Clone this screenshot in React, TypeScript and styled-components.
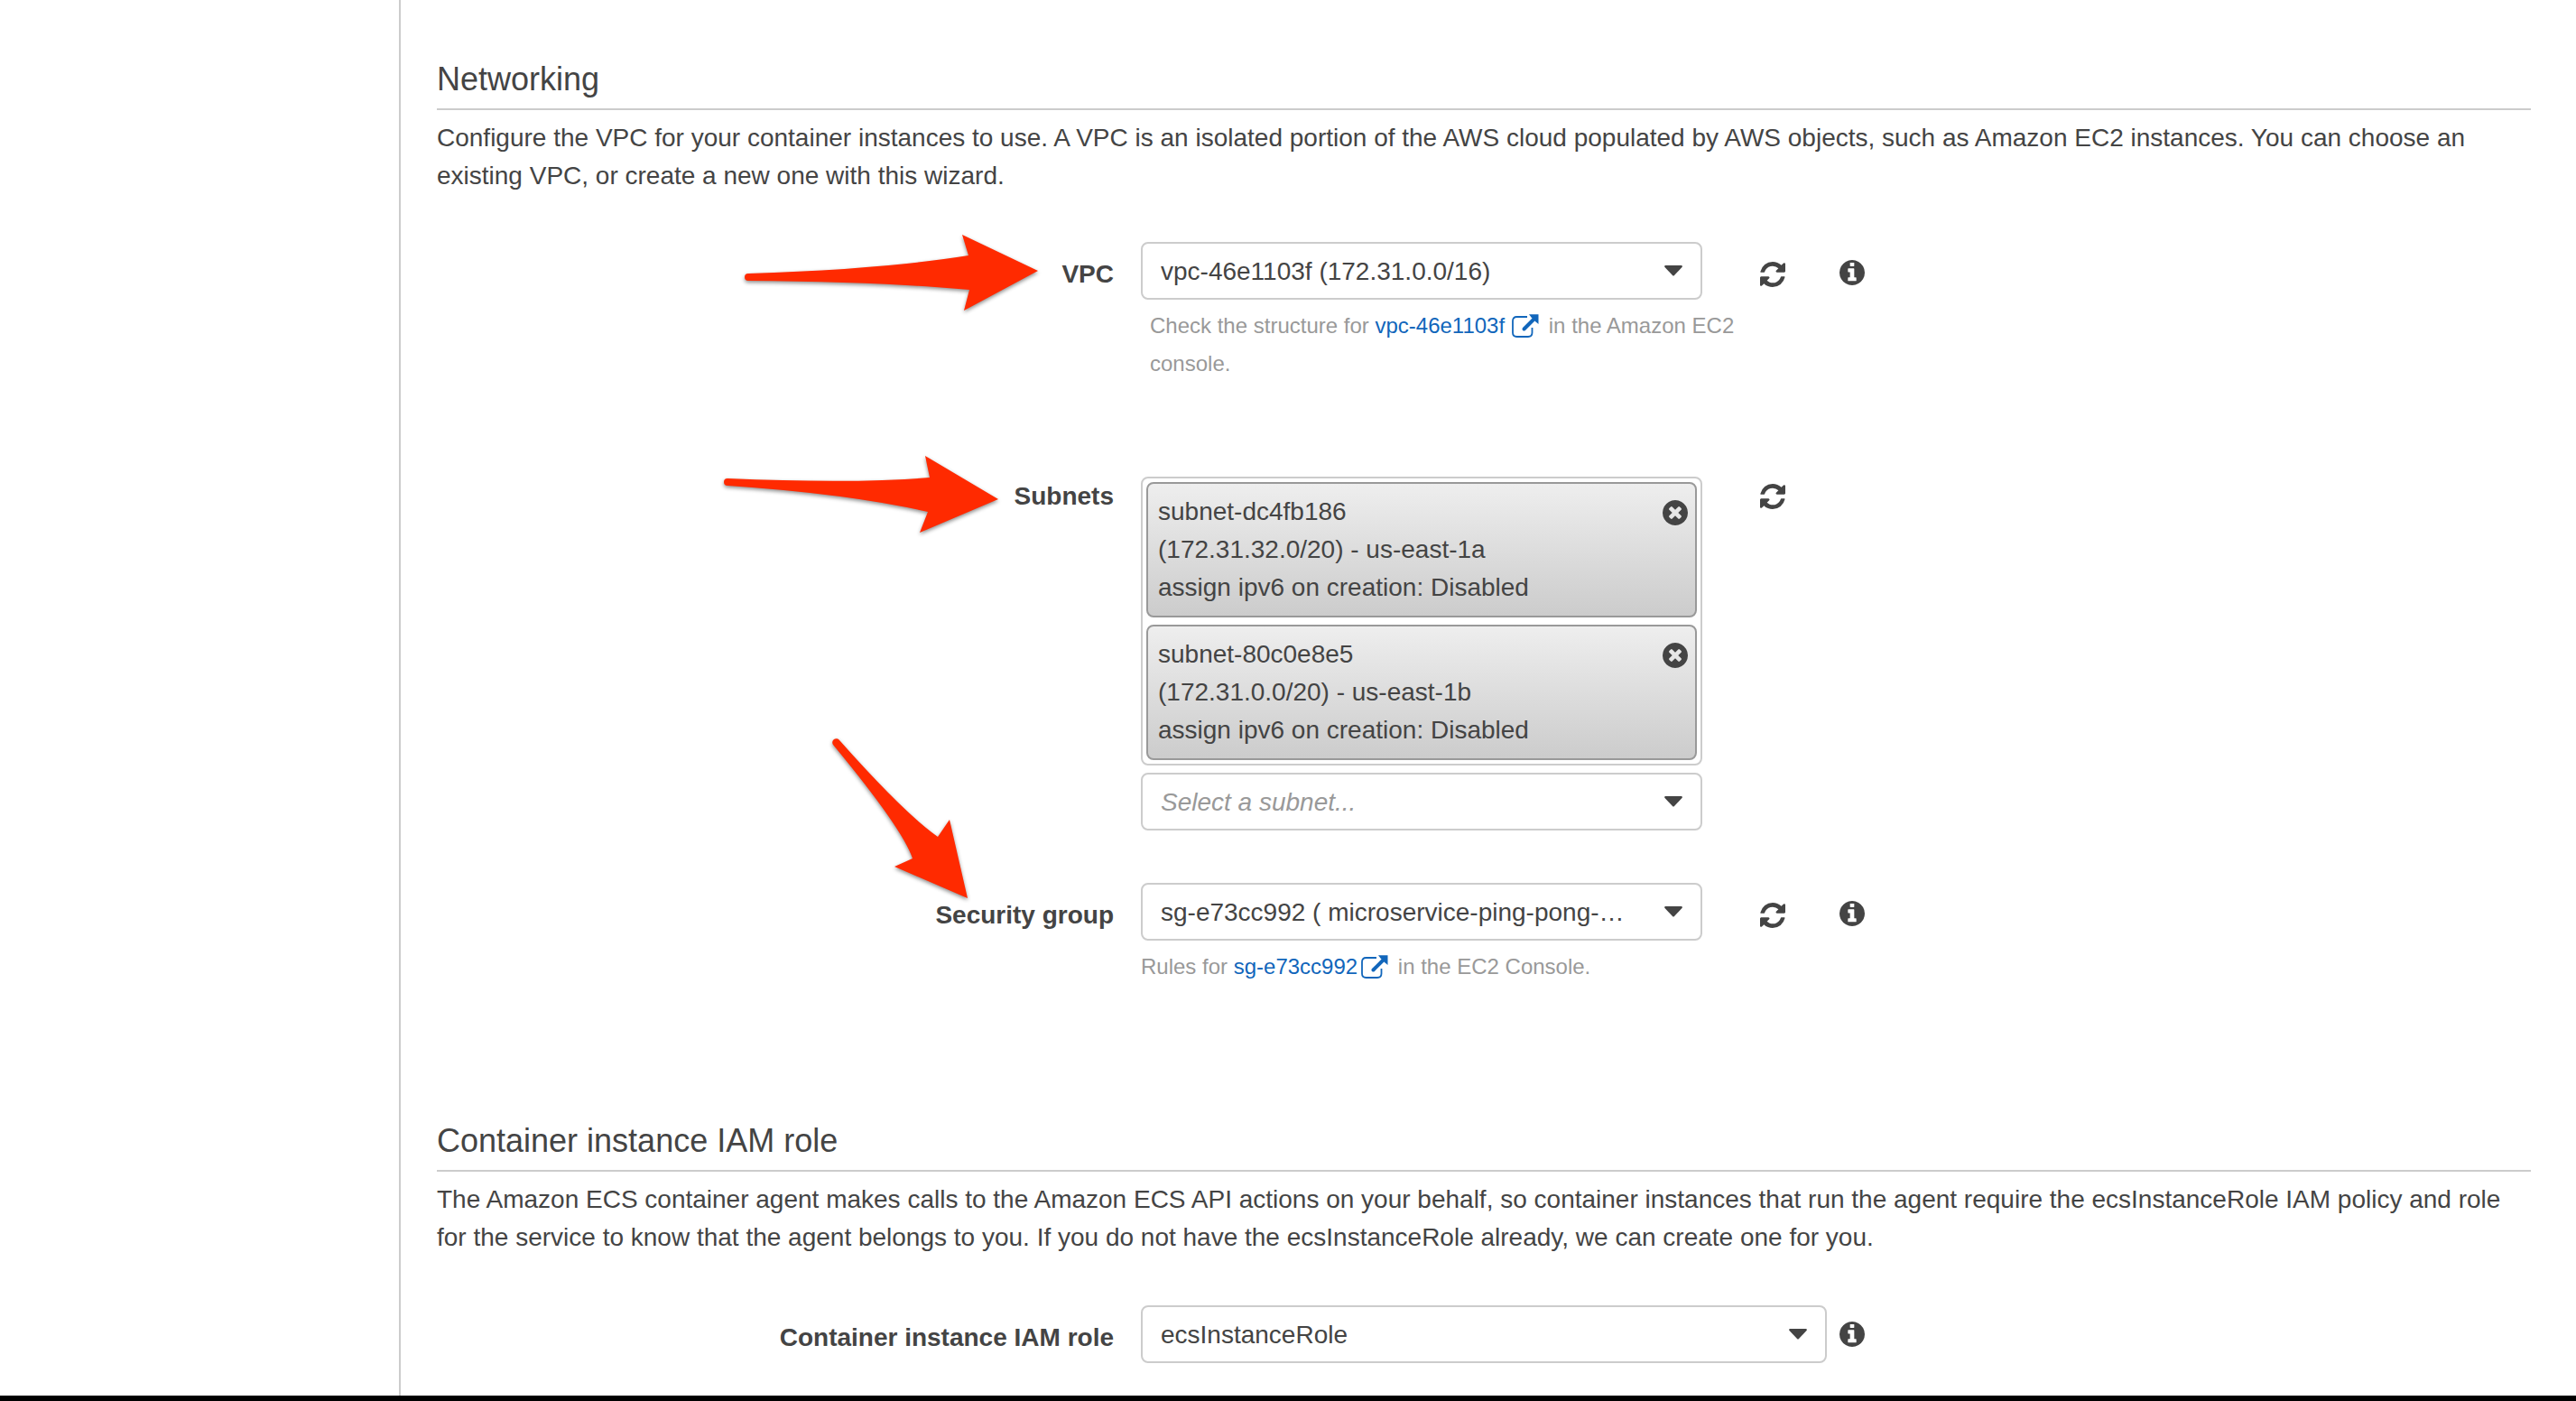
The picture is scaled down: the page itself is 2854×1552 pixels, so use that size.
import React from "react";
import styled, { createGlobalStyle } from "styled-components";

const color = {
  text: "#444",
  muted: "#999",
  line: "#ccc",
  link: "#1166bb",
  arrow: "#ff2a00",
};

const GlobalStyle = createGlobalStyle`
  *, *::before, *::after {
    box-sizing: border-box;
  }

  body {
    margin: 0;
    background: #fff;
    color: ${color.text};
    font-family: "Liberation Sans", Arial, Helvetica, sans-serif;
    font-size: 28px;
    line-height: 42px;
  }
`;

const Page = styled.div`
  position: relative;
  display: flex;
  flex-direction: column;
  min-height: 100vh;
`;

const Columns = styled.div`
  display: flex;
  flex: 1;
`;

const Sidebar = styled.aside`
  flex: 0 0 444px;
  border-right: 2px solid ${color.line};
`;

const Main = styled.main`
  flex: 1;
  min-width: 0;
  padding: 67px 50px 36px 40px;
`;

const BottomEdge = styled.footer`
  height: 6px;
  background: #000;
`;

const Section = styled.section`
  & + & {
    margin-top: 151px;
  }
`;

const SectionTitle = styled.h2`
  margin: 0 0 10px;
  padding-bottom: 11px;
  border-bottom: 2px solid ${color.line};
  font-size: 36px;
  font-weight: 400;
  line-height: 42px;
`;

const Intro = styled.p`
  margin: 0;
`;

const FormRow = styled.div<{ $space: number }>`
  display: grid;
  grid-template-columns: minmax(0, 780fr) minmax(0, 774fr) minmax(0, 766fr);
  margin-top: ${(p) => p.$space}px;
`;

const Label = styled.label<{ $top?: boolean }>`
  padding: ${(p) => (p.$top ? 1 : 15)}px 30px 0 0;
  font-weight: 700;
  text-align: right;
`;

const Control = styled.div`
  display: grid;
  grid-template-columns: minmax(0, 622fr) minmax(0, 152fr);
  align-items: start;
`;

const Stack = styled.div`
  display: flex;
  flex-direction: column;
  gap: 8px;
`;

const SelectBox = styled.div<{ $wide?: boolean }>`
  position: relative;
  ${(p) => p.$wide && "grid-column: 1 / -1; margin-right: 14px;"}
`;

const Select = styled.select<{ $placeholder?: boolean }>`
  display: block;
  appearance: none;
  width: 100%;
  height: 64px;
  margin: 0;
  padding: 2px 60px 0 20px;
  border: 2px solid ${color.line};
  border-radius: 8px;
  background: #fff;
  color: ${(p) => (p.$placeholder ? color.muted : color.text)};
  font: inherit;
  font-style: ${(p) => (p.$placeholder ? "italic" : "normal")};
  text-overflow: ellipsis;
`;

const Caret = styled.svg`
  position: absolute;
  top: 26px;
  right: 22px;
  width: 20px;
  height: 12px;
  fill: ${color.text};
  pointer-events: none;
`;

const IconButton = styled.button<{ $top: number; $left?: number }>`
  display: block;
  width: 28px;
  height: 28px;
  margin: ${(p) => p.$top}px 0 0 ${(p) => p.$left ?? 0}px;
  padding: 0;
  border: 0;
  background: none;
  color: ${color.text};
  cursor: pointer;

  svg {
    display: block;
    width: 28px;
    height: 28px;
    fill: currentColor;
  }
`;

const Help = styled.p<{ $indent?: boolean }>`
  grid-column: 1 / -1;
  max-width: 700px;
  margin: 8px 0 0;
  padding-left: ${(p) => (p.$indent ? 10 : 0)}px;
  color: ${color.muted};
  font-size: 24px;
`;

const Link = styled.a`
  color: ${color.link};
  text-decoration: none;
`;

const ExternalSvg = styled.svg<{ $spaced?: boolean }>`
  width: 30px;
  height: 26px;
  margin: 0 4px 0 ${(p) => (p.$spaced ? 8 : 4)}px;
  vertical-align: -5px;
`;

const TokenList = styled.ul`
  display: flex;
  flex-direction: column;
  gap: 8px;
  margin: 0;
  padding: 4px;
  border: 2px solid ${color.line};
  border-radius: 8px;
  list-style: none;
`;

const Token = styled.li`
  display: flex;
  justify-content: space-between;
  align-items: flex-start;
  padding: 10px 8px 10px 11px;
  border: 2px solid ${color.muted};
  border-radius: 8px;
  background: linear-gradient(#eee, #ccc);
`;

const Annotations = styled.svg`
  position: absolute;
  top: 0;
  left: 0;
  width: 1160px;
  height: 1010px;
  fill: ${color.arrow};
  filter: drop-shadow(0 2px 2px rgba(0, 0, 0, 0.45));
  pointer-events: none;
`;

const RefreshIcon = () => (
  <svg viewBox="128 128 1536 1536" aria-hidden="true">
    <path d="M1639 1056q0 5-1 7-64 268-268 434.5t-478 166.5q-146 0-282.500-55t-243.500-157l-129 129q-19 19-45 19t-45-19-19-45v-448q0-26 19-45t45-19h448q26 0 45 19t19 45-19 45l-137 137q71 66 161 102t187 36q134 0 250-65t186-179q11-17 53-117 8-23 30-23h192q13 0 22.500 9.500t9.500 22.500zm25-800v448q0 26-19 45t-45 19h-448q-26 0-45-19t-19-45 19-45l138-138q-148-137-349-137-134 0-250 65t-186 179q-11 17-53 117-8 23-30 23h-199q-13 0-22.500-9.500t-9.500-22.500v-7q65-268 270-434.500t480-166.500q146 0 284 55.500t245 156.500l130-129q19-19 45-19t45 19 19 45z" />
  </svg>
);

const InfoIcon = () => (
  <svg viewBox="128 128 1536 1536" aria-hidden="true">
    <path d="M1152 1376v-160q0-14-9-23t-23-9h-96v-512q0-14-9-23t-23-9h-320q-14 0-23 9t-9 23v160q0 14 9 23t23 9h96v320h-96q-14 0-23 9t-9 23v160q0 14 9 23t23 9h448q14 0 23-9t9-23zm-128-896v-160q0-14-9-23t-23-9h-192q-14 0-23 9t-9 23v160q0 14 9 23t23 9h192q14 0 23-9t9-23zm640 416q0 209-103 385.500t-279.500 279.500-385.500 103-385.500-103-279.500-279.500-103-385.500 103-385.500 279.500-279.500 385.500-103 385.500 103 279.500 279.500 103 385.500z" />
  </svg>
);

const RemoveIcon = () => (
  <svg viewBox="128 128 1536 1536" aria-hidden="true">
    <path d="M1277 1122q0-26-19-45l-181-181 181-181q19-19 19-45 0-27-19-46l-90-90q-19-19-46-19-26 0-45 19l-181 181-181-181q-19-19-45-19-27 0-46 19l-90 90q-19 19-19 46 0 26 19 45l181 181-181 181q-19 19-19 45 0 27 19 46l90 90q19 19 46 19 26 0 45-19l181-181 181 181q19 19 45 19 27 0 46-19l90-90q19-19 19-46zm387-226q0 209-103 385.500t-279.500 279.500-385.500 103-385.500-103-279.500-279.500-103-385.500 103-385.500 279.500-279.500 385.500-103 385.500 103 279.500 279.500 103 385.500z" />
  </svg>
);

const ExternalIcon = ({ spaced }: { spaced?: boolean }) => (
  <ExternalSvg $spaced={spaced} viewBox="0 0 30 26" aria-hidden="true">
    <path
      d="M17 3H5.500Q1 3 1 7.500V20.500Q1 25 5.500 25H18Q22.500 25 22.500 20.500V15"
      fill="none"
      stroke={color.link}
      strokeWidth="1.800"
    />
    <path d="M13.500 16.500L24.500 5.500" stroke={color.link} strokeWidth="4" strokeLinecap="round" />
    <path d="M19 0.300H29.500V11L26.500 8.500L21.500 3.500Z" fill={color.link} />
  </ExternalSvg>
);

type DropdownProps = {
  id: string;
  value: string;
  wide?: boolean;
  placeholder?: boolean;
};

const Dropdown = ({ id, value, wide, placeholder }: DropdownProps) => (
  <SelectBox $wide={wide}>
    <Select id={id} $placeholder={placeholder}>
      <option>{value}</option>
    </Select>
    <Caret viewBox="0 0 20 12" aria-hidden="true">
      <path d="M1 0H19Q20.500 0.500 19.500 2L11 11Q10 12 9 11L0.500 2Q-0.500 0.500 1 0Z" />
    </Caret>
  </SelectBox>
);

const subnets = [
  { id: "subnet-dc4fb186", zone: "(172.31.32.0/20) - us-east-1a" },
  { id: "subnet-80c0e8e5", zone: "(172.31.0.0/20) - us-east-1b" },
];

export default function App() {
  return (
    <>
      <GlobalStyle />
      <Page>
        <Columns>
          <Sidebar />
          <Main>
            <Section>
              <SectionTitle>Networking</SectionTitle>
              <Intro>
                Configure the VPC for your container instances to use. A VPC is an isolated portion
                of the AWS cloud populated by AWS objects, such as Amazon EC2 instances. You can
                choose an existing VPC, or create a new one with this wizard.
              </Intro>

              <FormRow $space={52}>
                <Label htmlFor="vpc">VPC</Label>
                <Control>
                  <Dropdown id="vpc" value="vpc-46e1103f (172.31.0.0/16)" />
                  <IconButton type="button" $top={22} $left={64} aria-label="Refresh VPCs">
                    <RefreshIcon />
                  </IconButton>
                  <Help $indent>
                    Check the structure for{" "}
                    <Link href="#vpc-46e1103f">
                      vpc-46e1103f
                      <ExternalIcon spaced />
                    </Link>{" "}
                    in the Amazon EC2 console.
                  </Help>
                </Control>
                <IconButton type="button" $top={20} aria-label="About VPC">
                  <InfoIcon />
                </IconButton>
              </FormRow>

              <FormRow $space={104}>
                <Label htmlFor="subnet" $top>
                  Subnets
                </Label>
                <Control>
                  <Stack>
                    <TokenList>
                      {subnets.map((s) => (
                        <Token key={s.id}>
                          <div>
                            {s.id}
                            <br />
                            {s.zone}
                            <br />
                            assign ipv6 on creation: Disabled
                          </div>
                          <IconButton type="button" $top={8} aria-label={`Remove ${s.id}`}>
                            <RemoveIcon />
                          </IconButton>
                        </Token>
                      ))}
                    </TokenList>
                    <Dropdown id="subnet" value="Select a subnet..." placeholder />
                  </Stack>
                  <IconButton type="button" $top={8} $left={64} aria-label="Refresh subnets">
                    <RefreshIcon />
                  </IconButton>
                </Control>
              </FormRow>

              <FormRow $space={58}>
                <Label htmlFor="security-group">Security group</Label>
                <Control>
                  <Dropdown
                    id="security-group"
                    value="sg-e73cc992 ( microservice-ping-pong-…"
                  />
                  <IconButton type="button" $top={22} $left={64} aria-label="Refresh security groups">
                    <RefreshIcon />
                  </IconButton>
                  <Help>
                    Rules for{" "}
                    <Link href="#sg-e73cc992">
                      sg-e73cc992
                      <ExternalIcon />
                    </Link>{" "}
                    in the EC2 Console.
                  </Help>
                </Control>
                <IconButton type="button" $top={20} aria-label="About security groups">
                  <InfoIcon />
                </IconButton>
              </FormRow>
            </Section>

            <Section>
              <SectionTitle>Container instance IAM role</SectionTitle>
              <Intro>
                The Amazon ECS container agent makes calls to the Amazon ECS API actions on your
                behalf, so container instances that run the agent require the ecsInstanceRole IAM
                policy and role for the service to know that the agent belongs to you. If you do not
                have the ecsInstanceRole already, we can create one for you.
              </Intro>

              <FormRow $space={54}>
                <Label htmlFor="iam-role">Container instance IAM role</Label>
                <Control>
                  <Dropdown id="iam-role" value="ecsInstanceRole" wide />
                </Control>
                <IconButton type="button" $top={18} aria-label="About the IAM role">
                  <InfoIcon />
                </IconButton>
              </FormRow>
            </Section>
          </Main>
        </Columns>
        <BottomEdge />

        <Annotations viewBox="0 0 1160 1010" aria-hidden="true">
          <path d="M829 303Q980 298 1073 283L1066 260L1150 300L1068 344L1074 321Q975 312 829 311A4 4 0 0 1 829 303Z" />
          <path d="M806 530Q945 536 1030 529L1025 505L1106 553L1019 590L1028 567Q940 547 806 538A4 4 0 0 1 806 530Z" />
          <path d="M930 820Q1002 901 1039 927L1052 908L1072 995L991 960L1011 951Q1000 918 923 825A4 4 0 0 1 930 820Z" />
        </Annotations>
      </Page>
    </>
  );
}
